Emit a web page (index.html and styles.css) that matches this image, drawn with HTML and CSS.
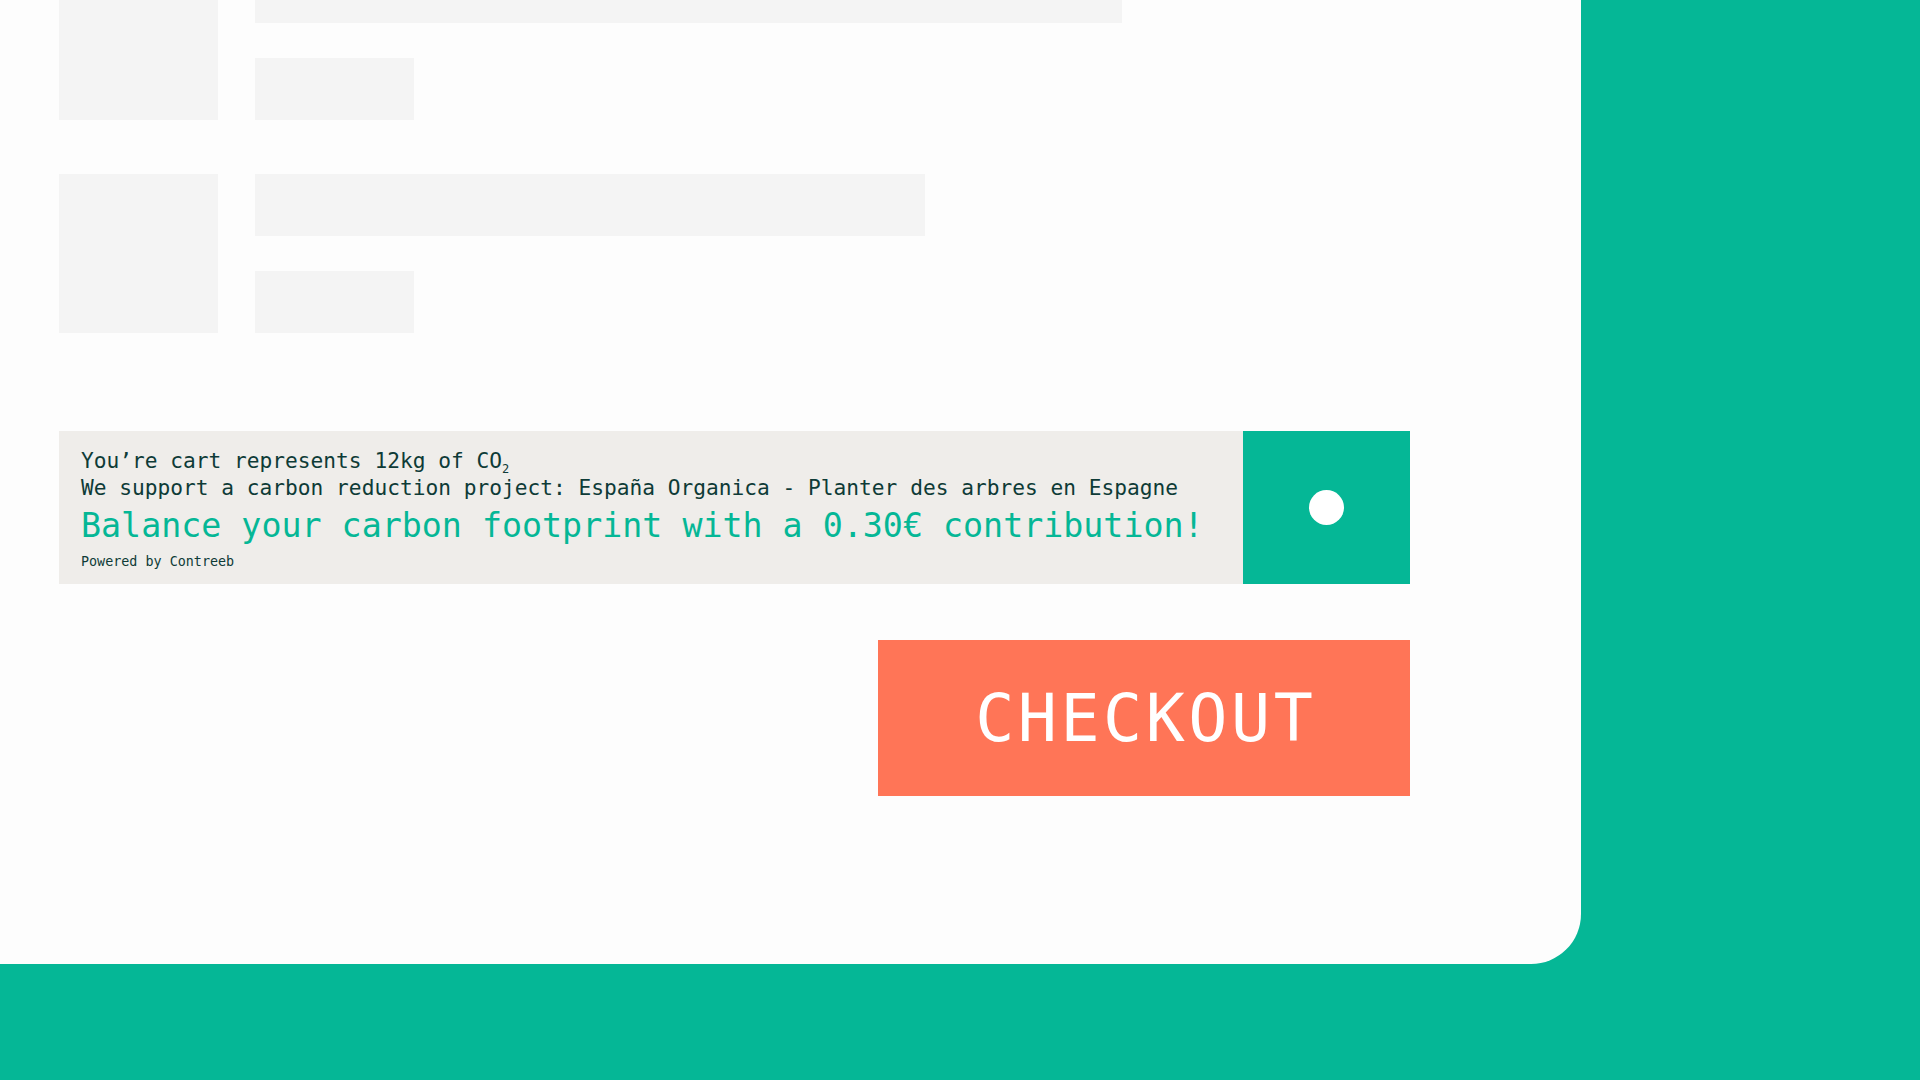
FILE: index.html
```html
<!DOCTYPE html>
<html lang="en">
<head>
<meta charset="utf-8">
<title>Cart</title>
<link rel="stylesheet" href="styles.css">
</head>
<body>
<div class="card">
  <div class="items">
    <div class="item item-first">
      <div class="thumb"></div>
      <div class="lines">
        <div class="bar bar-long"></div>
        <div class="bar bar-short"></div>
      </div>
    </div>
    <div class="item">
      <div class="thumb"></div>
      <div class="lines">
        <div class="bar bar-mid"></div>
        <div class="bar bar-short"></div>
      </div>
    </div>
  </div>

  <div class="banner">
    <div class="banner-text">
      <p class="line">You’re cart represents 12kg of CO<sub class="sub">2</sub></p>
      <p class="line">We support a carbon reduction project: España Organica - Planter des arbres en Espagne</p>
      <p class="cta">Balance your carbon footprint with a 0.30€ contribution!</p>
      <p class="powered">Powered by Contreeb</p>
    </div>
    <div class="toggle"><span class="dot"></span></div>
  </div>

  <div class="actions">
    <button class="checkout"><span class="checkout-label">CHECKOUT</span></button>
  </div>
</div>
</body>
</html>
```
FILE: styles.css
```css
html, body {
  margin: 0;
  padding: 0;
}
body {
  background: #05b796;
  width: 1920px;
  height: 1080px;
  overflow: hidden;
  font-family: "DejaVu Sans Mono", "Liberation Mono", monospace;
}
.card {
  width: 1581px;
  height: 964px;
  background: #fdfdfd;
  border-bottom-right-radius: 50px;
  box-sizing: border-box;
  padding-left: 59px;
  overflow: hidden;
}
.items {
  display: flex;
  flex-direction: column;
  gap: 54px;
  margin-top: -39px;
}
.item {
  display: flex;
  gap: 37px;
}
.thumb {
  width: 159px;
  height: 159px;
  background: #f4f4f4;
}
.lines {
  display: flex;
  flex-direction: column;
  justify-content: space-between;
}
.bar {
  height: 62px;
  background: #f4f4f4;
}
.bar-long { width: 867px; }
.bar-mid { width: 670px; }
.bar-short { width: 159px; }

.banner {
  display: flex;
  width: 1351px;
  height: 153px;
  margin-top: 98px;
}
.banner-text {
  flex: 1;
  background: #efedea;
  padding: 16px 0 0 22px;
  color: #0e3b37;
}
.banner-text p {
  margin: 0;
  white-space: nowrap;
}
.line {
  font-size: 21.2px;
  line-height: 27px;
}
.sub {
  font-size: 12px;
  line-height: 0;
  vertical-align: -5px;
}
.cta {
  font-size: 33.3px;
  line-height: 38px;
  color: #05b796;
  margin-top: 6px !important;
}
.powered {
  font-size: 13.4px;
  line-height: 16px;
  margin-top: 9px !important;
}
.toggle {
  width: 167px;
  background: #05b796;
  display: flex;
  align-items: center;
  justify-content: center;
}
.dot {
  width: 35px;
  height: 35px;
  border-radius: 50%;
  background: #ffffff;
}

.actions {
  width: 1351px;
  display: flex;
  justify-content: flex-end;
  margin-top: 56px;
}
.checkout {
  width: 532px;
  height: 156px;
  border: none;
  background: #ff7557;
  color: #ffffff;
  font-family: "DejaVu Sans Mono", "Liberation Mono", monospace;
  font-size: 65px;
  letter-spacing: 3.5px;
  padding: 0 0 0 3.5px;
  display: flex;
  align-items: center;
  justify-content: center;
  cursor: pointer;
}
.checkout-label {
  line-height: 1;
}
```
